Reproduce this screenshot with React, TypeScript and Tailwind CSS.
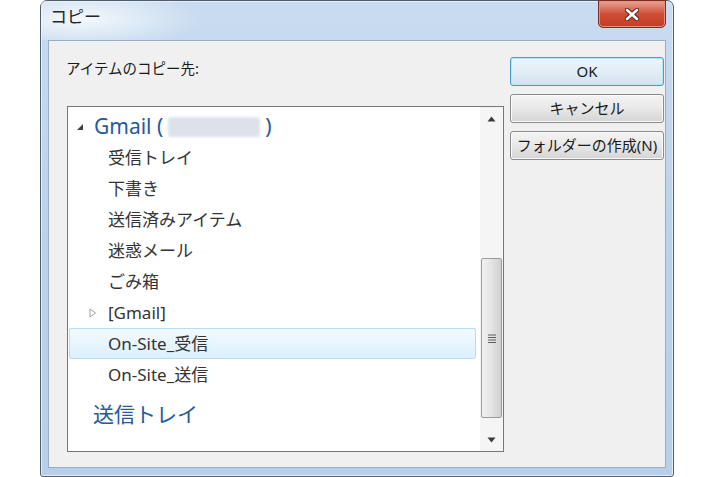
import React from "react";

const font = "font-['Noto_Sans','Noto_Sans_CJK_JP',sans-serif]";

function Row({
  indent,
  children,
  selected,
  className = "",
}: {
  indent: string;
  children: React.ReactNode;
  selected?: boolean;
  className?: string;
}) {
  return (
    <div
      className={
        "flex items-center h-[31px] ml-[1px] mr-[4px] rounded-[2px] border " +
        (selected
          ? "border-[#b4def5] bg-gradient-to-b from-[#f3fafe] to-[#dcf0fc] "
          : "border-transparent ") +
        indent +
        " " +
        className
      }
    >
      {children}
    </div>
  );
}

function Button({ label, focused }: { label: string; focused?: boolean }) {
  return (
    <div
      className={
        "h-[29px] w-[154px] rounded-[3px] border flex items-center justify-center text-[15px] text-[#1a1a1a] leading-none " +
        (focused
          ? "border-[#3f9fd0] bg-gradient-to-b from-[#eef5fb] via-[#e2edf6] to-[#d3e3f0] shadow-[inset_0_0_0_1px_#b9e6f8]"
          : "border-[#8a8a8a] bg-gradient-to-b from-[#f4f4f4] via-[#e8e8e8] to-[#d4d4d4] shadow-[inset_0_0_0_1px_#fbfbfb]")
      }
    >
      {label}
    </div>
  );
}

function ScrollBar() {
  return (
    <div className="w-[23px] flex flex-col bg-[#f5f5f5]">
      <div className="h-[23px] flex items-center justify-center">
        <svg width="9" height="6" viewBox="0 0 9 6">
          <path d="M0.5 5.5 L4.5 0.5 L8.5 5.5 Z" fill="#3c3c3c" />
        </svg>
      </div>
      <div className="h-[128px]" />
      <div className="h-[160px] mx-[1px] rounded-[2px] border border-[#9b9b9b] bg-gradient-to-r from-[#f1f1f1] via-[#e4e4e4] to-[#cfcfcf] flex items-center justify-center">
        <svg width="8" height="9" viewBox="0 0 8 9">
          <path d="M0 1 H8 M0 3.5 H8 M0 6 H8 M0 8.5 H8" stroke="#5e5e5e" strokeWidth="1" />
        </svg>
      </div>
      <div className="flex-1" />
      <div className="h-[23px] flex items-center justify-center">
        <svg width="9" height="6" viewBox="0 0 9 6">
          <path d="M0.5 0.5 L4.5 5.5 L8.5 0.5 Z" fill="#3c3c3c" />
        </svg>
      </div>
    </div>
  );
}

export default function App() {
  return (
    <div className={"w-[715px] h-[477px] bg-white flex overflow-hidden " + font}>
      <div className="ml-[40px] w-[634px] h-[477px] border border-[#4e5c6c] rounded-t-[7px] rounded-b-[3px] bg-gradient-to-b from-[#c9dcf0] via-[#bad2ec] to-[#b7cfe9] flex flex-col px-[7px] pb-[8px] shadow-[inset_0_0_0_1px_#e4eef8]">
        <div className="h-[39px] flex justify-between bg-[radial-gradient(ellipse_120px_30px_at_40px_18px,#f4f8fc,transparent)] -mx-[7px] px-[7px]">
          <span className="pl-[2px] pt-[5px] text-[17px] leading-[22px] text-[#262626]">
            コピー
          </span>
          <div className="-mt-[1px] w-[68px] h-[28px] rounded-b-[5px] border border-[#7a2d22] bg-gradient-to-b from-[#e7a395] via-[#cf4d36] to-[#c23c23] shadow-[inset_0_0_0_1px_#e88e7c] flex items-center justify-center">
            <svg width="14" height="13" viewBox="0 0 14 13">
              <path d="M2 2 L12 11 M12 2 L2 11" stroke="#5a2018" strokeWidth="4.5" strokeLinecap="round" />
              <path d="M2 2 L12 11 M12 2 L2 11" stroke="#ffffff" strokeWidth="2.6" strokeLinecap="round" />
            </svg>
          </div>
        </div>
        <div className="flex-1 bg-[#f0f0f0] border border-[#98adc4] flex">
          <div className="flex flex-col pl-[18px] w-[455px]">
            <div className="mt-[17px] -ml-[1px] text-[14.5px] leading-[20px] text-[#1a1a1a]">
              アイテムのコピー先:
            </div>
            <div className="mt-[28px] w-[437px] h-[346px] border border-[#767676] bg-white flex">
              <div className="flex-1 pt-[4px] flex flex-col">
                <Row indent="pl-[6px]">
                  <svg width="8" height="8" viewBox="0 0 8 8" className="mr-[10px]">
                    <path d="M7 1 L7 7 L1 7 Z" fill="#404040" />
                  </svg>
                  <span className="text-[21px] leading-none text-[#245a9b] flex items-center">
                    Gmail (
                    <span className="inline-block w-[92px] h-[20px] mx-[5px] bg-[#dde2ea] blur-[1.5px] rounded-[3px]" />
                    )
                  </span>
                </Row>
                {["受信トレイ", "下書き", "送信済みアイテム", "迷惑メール", "ごみ箱"].map((t) => (
                  <Row key={t} indent="pl-[38px]">
                    <span className="text-[17px] leading-none text-[#333333]">{t}</span>
                  </Row>
                ))}
                <Row indent="pl-[19px]">
                  <svg width="8" height="10" viewBox="0 0 8 10" className="mr-[11px]">
                    <path d="M1 1 L6.5 5 L1 9 Z" fill="none" stroke="#a0a0a0" strokeWidth="1" />
                  </svg>
                  <span className="text-[17px] leading-none text-[#333333]">[Gmail]</span>
                </Row>
                <Row indent="pl-[38px]" selected>
                  <span className="text-[17px] leading-none text-[#333333]">On-Site_受信</span>
                </Row>
                <Row indent="pl-[38px]">
                  <span className="text-[17px] leading-none text-[#333333]">On-Site_送信</span>
                </Row>
                <Row indent="pl-[23px]" className="mt-[9px]">
                  <span className="text-[21px] leading-none text-[#245a9b]">送信トレイ</span>
                </Row>
              </div>
              <ScrollBar />
            </div>
          </div>
          <div className="ml-[6px] mt-[16px] flex flex-col gap-[8px]">
            <Button label="OK" focused />
            <Button label="キャンセル" />
            <Button label="フォルダーの作成(N)" />
          </div>
        </div>
      </div>
    </div>
  );
}
